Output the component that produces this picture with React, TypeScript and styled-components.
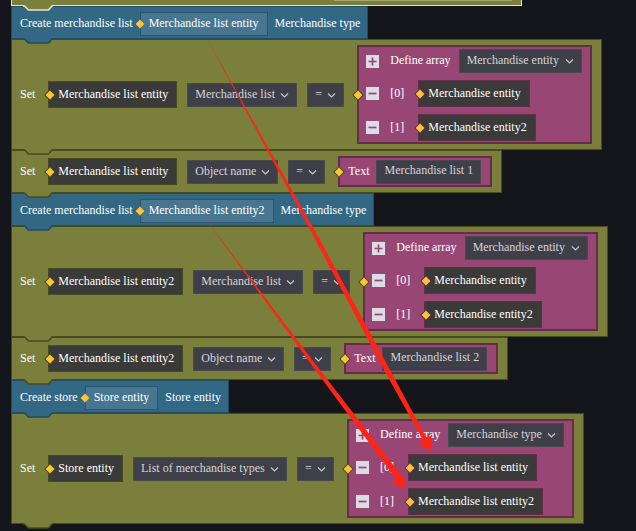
import React from "react";
import styled, { createGlobalStyle } from "styled-components";

type Tone = "olive" | "blue";

const tones = {
  olive: { fill: "#7a803b", edge: "#474b20" },
  blue: { fill: "#336885", edge: "#234b61" },
};

const plum = { fill: "#984775", edge: "#642d4a" };

const GlobalStyle = createGlobalStyle`
  body {
    margin: 0;
    background: #15161b;
    color: #fff;
    font-family: "Liberation Serif", "Times New Roman", serif;
    font-size: 12px;
    line-height: 16px;
  }
  *, *::before, *::after { box-sizing: border-box; }
`;

const Workspace = styled.main`
  position: relative;
  overflow: hidden;
  min-height: 100vh;
  padding-left: 11px;
`;

const Stack = styled.div`
  display: flex;
  flex-direction: column;
  align-items: flex-start;
`;

const Statement = styled.section<{ $tone: Tone }>`
  position: relative;
  display: flex;
  align-items: center;
  white-space: nowrap;
  background: ${(p) => tones[p.$tone].fill};
  border: 1px solid ${(p) => tones[p.$tone].edge};
`;

const PreviousStatement = styled(Statement)`
  width: 511px;
  max-width: 100%;
  height: 6px;
  justify-content: flex-end;
  align-items: flex-start;
  padding-right: 9px;
  border-width: 0 1px 1px;
  border-color: #e4e5d0;
`;

const PreviousField = styled.div`
  width: 178px;
  height: 1px;
  background: #a2a672;
`;

const CreateStatement = styled(Statement)`
  gap: 7px;
  padding: 5px 7px 2px 8px;
`;

const SetStatement = styled(Statement)`
  padding: 5px 9px 5px 8px;
`;

const Label = styled.span`
  padding-bottom: 2px;
`;

const SetLabel = styled(Label)`
  margin-right: 13px;
`;

const Fields = styled.div`
  display: flex;
  gap: 10px;
  margin: 0 13px 0 10px;
`;

const NotchSvg = styled.svg`
  position: absolute;
  z-index: 1;
  left: 11px;
  top: 100%;
  width: 30px;
  height: 7px;
`;

const DiamondSvg = styled.svg<{ $left: number }>`
  position: absolute;
  left: ${(p) => p.$left}px;
  top: calc(50% - 6px);
  width: 12px;
  height: 12px;
`;

const NameField = styled.label`
  position: relative;
  display: flex;
`;

const NameInput = styled.input`
  field-sizing: content;
  height: 24px;
  padding: 0 8px 1px;
  border: 1px solid #2a566f;
  border-radius: 0;
  background: #487690;
  color: #fff;
  font: inherit;
  outline: none;
`;

const Entity = styled.div<{ $edge: string }>`
  position: relative;
  height: 27px;
  padding: 0 8px 0 9px;
  border: 1px solid ${(p) => p.$edge};
  background: #3a3a39;
  line-height: 24px;
`;

const SelectWrap = styled.span`
  position: relative;
  display: flex;
`;

const Select = styled.select`
  appearance: none;
  height: 24px;
  padding: 0 22px 2px 8px;
  border: 0;
  border-radius: 0;
  background: #3f3f49;
  box-shadow: inset 0 0 0 1px #4a4a4c;
  color: #d5d5d6;
  font: inherit;
  outline: none;
`;

const ChevronSvg = styled.svg`
  position: absolute;
  right: 8px;
  top: 9px;
  width: 9px;
  height: 7px;
  pointer-events: none;
`;

const Value = styled.div`
  position: relative;
  background: ${plum.fill};
  border: 2px solid ${plum.edge};
`;

const ArrayValue = styled(Value)`
  display: grid;
  gap: 7px;
  padding: 2px 8px 1px 7px;
`;

const ArrayRow = styled.div`
  display: flex;
  align-items: center;
`;

const IndexLabel = styled(Label)`
  width: 28px;
`;

const DefineLabel = styled(Label)`
  margin-right: 8px;
`;

const TextValue = styled(Value)`
  display: flex;
  align-items: center;
  gap: 7px;
  height: 31px;
  padding: 0 9px 0 8px;
`;

const TextInput = styled.input`
  field-sizing: content;
  height: 24px;
  padding: 0 8px 2px;
  border: 0;
  background: #3f3f49;
  box-shadow: inset 0 0 0 1px #4c4650;
  color: #d5d5d6;
  font: inherit;
  outline: none;
`;

const ToggleButton = styled.button`
  display: flex;
  width: 13px;
  height: 13px;
  margin-right: 11px;
  padding: 0;
  border: 0;
  background: #dcdce6;
`;

const ArrowLayer = styled.svg`
  position: absolute;
  z-index: 2;
  left: 0;
  top: 0;
  width: 636px;
  height: 531px;
  pointer-events: none;
`;

function Notch({ fill, edge }: { fill: string; edge: string }) {
  return (
    <NotchSvg viewBox="0 0 30 7" aria-hidden="true">
      <path d="M1 0V1L5 5H26L29 1V0Z" fill={fill} />
      <path d="M0 1H1.5L5.5 5H25.5L29 1H30" fill="none" stroke={edge} strokeWidth="1.6" />
    </NotchSvg>
  );
}

function Diamond({ edge = "none", left = -5 }: { edge?: string; left?: number }) {
  return (
    <DiamondSvg $left={left} viewBox="0 0 12 12" aria-hidden="true">
      <path d="M6 0.2L11.8 6L6 11.8L0.2 6Z" fill={edge} />
      <path d="M6 1.6L10.4 6L6 10.4L1.6 6Z" fill="#ffc433" />
    </DiamondSvg>
  );
}

function Dropdown({ value, label }: { value: string; label: string }) {
  return (
    <SelectWrap>
      <Select aria-label={label} defaultValue={value}>
        <option>{value}</option>
      </Select>
      <ChevronSvg viewBox="0 0 9 7" aria-hidden="true">
        <path d="M1 1.5L4.5 5L8 1.5" fill="none" stroke="#c9c9cc" strokeWidth="1.2" />
      </ChevronSvg>
    </SelectWrap>
  );
}

function Toggle({ kind }: { kind: "plus" | "minus" }) {
  return (
    <ToggleButton type="button" aria-label={kind === "plus" ? "Add item" : "Remove item"}>
      <svg width="13" height="13" viewBox="0 0 13 13" aria-hidden="true">
        <path
          d={kind === "plus" ? "M2.5 6.5H10.5M6.5 2.5V10.5" : "M2.5 6.5H10.5"}
          stroke="#984775"
          strokeWidth="1.7"
          fill="none"
        />
      </svg>
    </ToggleButton>
  );
}

function Create({ label, name, type }: { label: string; name: string; type: string }) {
  return (
    <CreateStatement $tone="blue">
      <Label>{label}</Label>
      <NameField>
        <NameInput aria-label={label} defaultValue={name} />
        <Diamond left={-6} />
      </NameField>
      <Label>{type}</Label>
      <Notch {...tones.blue} />
    </CreateStatement>
  );
}

interface SetProps {
  target: string;
  property: string;
  children: React.ReactNode;
}

function SetBlock({ target, property, children }: SetProps) {
  return (
    <SetStatement $tone="olive">
      <SetLabel>Set</SetLabel>
      <Entity $edge={tones.olive.edge}>
        {target}
        <Diamond edge={tones.olive.edge} />
      </Entity>
      <Fields>
        <Dropdown label="Property" value={property} />
        <Dropdown label="Operator" value="=" />
      </Fields>
      {children}
      <Notch {...tones.olive} />
    </SetStatement>
  );
}

function ArrayBlock({ type, items }: { type: string; items: string[] }) {
  return (
    <ArrayValue>
      <ArrayRow>
        <Toggle kind="plus" />
        <DefineLabel>Define array</DefineLabel>
        <Dropdown label="Array type" value={type} />
      </ArrayRow>
      {items.map((item, i) => (
        <ArrayRow key={item}>
          <Toggle kind="minus" />
          <IndexLabel>[{i}]</IndexLabel>
          <Entity $edge={plum.edge}>
            {item}
            <Diamond edge={plum.edge} />
          </Entity>
        </ArrayRow>
      ))}
      <Diamond edge={tones.olive.edge} left={-7} />
    </ArrayValue>
  );
}

function TextBlock({ value }: { value: string }) {
  return (
    <TextValue>
      <Label>Text</Label>
      <TextInput aria-label="Text" defaultValue={value} />
      <Diamond edge={tones.olive.edge} left={-7} />
    </TextValue>
  );
}

export default function App() {
  return (
    <>
      <GlobalStyle />
      <Workspace>
        <Stack>
          <PreviousStatement $tone="olive">
            <PreviousField />
            <Notch fill={tones.olive.fill} edge="#e4e5d0" />
          </PreviousStatement>
          <Create label="Create merchandise list" name="Merchandise list entity" type="Merchandise type" />
          <SetBlock target="Merchandise list entity" property="Merchandise list">
            <ArrayBlock type="Merchandise entity" items={["Merchandise entity", "Merchandise entity2"]} />
          </SetBlock>
          <SetBlock target="Merchandise list entity" property="Object name">
            <TextBlock value="Merchandise list 1" />
          </SetBlock>
          <Create label="Create merchandise list" name="Merchandise list entity2" type="Merchandise type" />
          <SetBlock target="Merchandise list entity2" property="Merchandise list">
            <ArrayBlock type="Merchandise entity" items={["Merchandise entity", "Merchandise entity2"]} />
          </SetBlock>
          <SetBlock target="Merchandise list entity2" property="Object name">
            <TextBlock value="Merchandise list 2" />
          </SetBlock>
          <Create label="Create store" name="Store entity" type="Store entity" />
          <SetBlock target="Store entity" property="List of merchandise types">
            <ArrayBlock
              type="Merchandise type"
              items={["Merchandise list entity", "Merchandise list entity2"]}
            />
          </SetBlock>
        </Stack>
        <ArrowLayer viewBox="0 0 636 531" fill="#ff2415" aria-hidden="true">
          <path d="M206 37L319 238L390 370L426 437L431 436L431 451L419 444L423 440L384 370L315 239Z" />
          <path d="M204 217L320 370L401 475L404 475L405 488L392 484L396 479L316 371Z" />
        </ArrowLayer>
      </Workspace>
    </>
  );
}
